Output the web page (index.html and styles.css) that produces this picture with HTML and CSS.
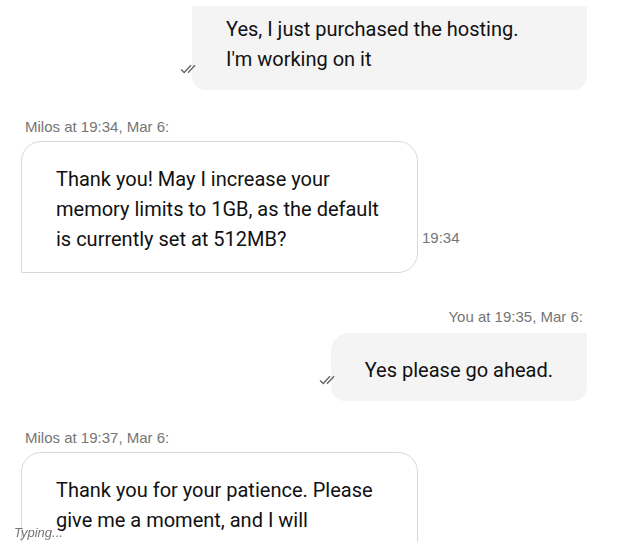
FILE: index.html
```html
<!DOCTYPE html>
<html lang="en">
<head>
  <meta charset="UTF-8" />
  <meta name="viewport" content="width=device-width, initial-scale=1.0"/>
  <title>Support Chat</title>
  <link rel="stylesheet" href="styles.css">
</head>
<body>

  <main class="chat">
    <!-- Scrolled message, top is cut off -->
    <div class="message me continued">
      <div class="bubble">
        Yes, I just purchased the hosting.<br>I'm working on it
        <svg class="ticks" viewBox="0 0 16 10" aria-label="Read"><path d="M1 5.5L4.2 8.5L11 1.2M8 8.8L15 1.2"/></svg>
      </div>
    </div>

    <div class="message agent">
      <div class="author">Milos at 19:34, Mar 6:</div>
      <div class="row">
        <div class="bubble">Thank you! May I increase your memory limits to 1GB, as the default is currently set at 512MB?</div>
        <span class="time">19:34</span>
      </div>
    </div>

    <div class="message me">
      <div class="author">You at 19:35, Mar 6:</div>
      <div class="bubble">
        Yes please go ahead.
        <svg class="ticks" viewBox="0 0 16 10" aria-label="Read"><path d="M1 5.5L4.2 8.5L11 1.2M8 8.8L15 1.2"/></svg>
      </div>
    </div>

    <div class="message agent latest">
      <div class="author">Milos at 19:37, Mar 6:</div>
      <div class="row">
        <div class="bubble">Thank you for your patience. Please give me a moment, and I will</div>
      </div>
    </div>
  </main>

  <div class="typing">Typing...</div>

</body>
</html>
```

FILE: styles.css
```css
* { box-sizing: border-box; }
body {
  margin: 0;
  background: #fff;
  color: #111;
  font-family: Roboto, "Liberation Sans", sans-serif;
}
.chat {
  height: calc(100vh - 11px);
  margin-top: 6px;
  padding: 0 31px 0 21px;
  overflow: hidden;
}
.message { display: flex; flex-direction: column; }
.me { align-items: flex-end; margin-bottom: 27px; }
.agent { align-items: flex-start; margin-bottom: 34px; }
.author, .time, .typing {
  font-family: "Liberation Sans", Arial, sans-serif;
  font-size: 15px; line-height: 20px;
  color: #757575;
}
.author { padding: 0 4px; margin-bottom: 4px; }
.me .author { margin-bottom: 6px; }
.row { display: flex; align-items: flex-end; gap: 4px; }
.bubble {
  position: relative;
  max-width: 397px;
  padding: 22px 34px 16px;
  font-size: 20px; line-height: 30px;
}
.me .bubble {
  background: #f4f4f4;
  border-radius: 18px 0 14px 14px;
}
.agent .bubble {
  width: 397px;
  padding-bottom: 18px;
  border: 1px solid #d3dae0;
  border-radius: 20px 20px 20px 0;
}
.continued .bubble {
  width: 395px;
  padding-top: 8px;
  border-radius: 0 0 14px 14px;
}
.latest .bubble { min-height: 132px; }
.time { margin-bottom: 25px; }
.ticks {
  position: absolute; left: -12px; bottom: 16px;
  width: 16px; height: 10px;
  fill: none; stroke: #666; stroke-width: 1.4;
}
.typing {
  position: fixed; left: 14px; bottom: 4px;
  font-size: 13px; font-style: italic;
}
```
